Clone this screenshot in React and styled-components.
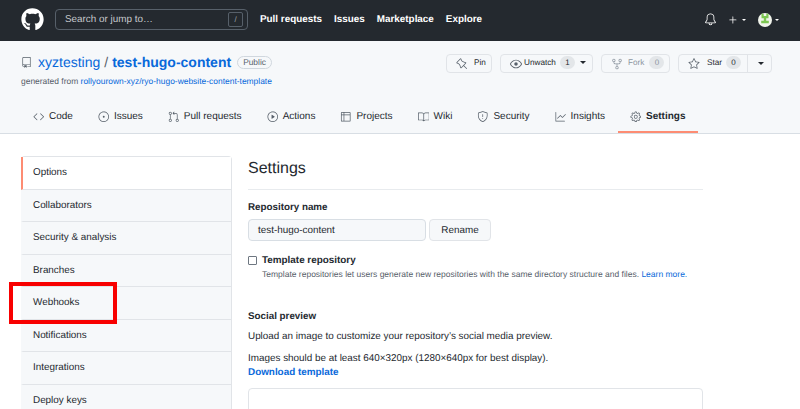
import React from 'react'
import styled, { createGlobalStyle } from 'styled-components'
import { FaGithub } from 'react-icons/fa'
import {
  GoBell,
  GoPlus,
  GoRepo,
  GoPin,
  GoEye,
  GoRepoForked,
  GoStar,
  GoCode,
  GoIssueOpened,
  GoGitPullRequest,
  GoPlay,
  GoTable,
  GoBook,
  GoShield,
  GoGraph,
  GoGear,
} from 'react-icons/go'

const GlobalStyle = createGlobalStyle`
  html, body {
    margin: 0;
    padding: 0;
    background: #fff;
  }
  body {
    font-family: "Liberation Sans", Arial, sans-serif;
    color: #24292f;
    overflow: hidden;
    text-rendering: geometricPrecision;
  }
`

const Page = styled.div`
  position: relative;
  width: 800px;
  height: 409px;
  overflow: hidden;
`

const TopBar = styled.header`
  display: flex;
  align-items: center;
  height: 41px;
  padding: 0 21px 2px;
  background: #24292f;
  color: #fff;
  box-sizing: border-box;
`

const SearchBox = styled.div`
  display: flex;
  align-items: center;
  justify-content: space-between;
  box-sizing: border-box;
  width: 193px;
  height: 21px;
  margin: 0 12px 0 11px;
  padding: 0 4px 0 9px;
  border: 1px solid #57606a;
  border-radius: 4px;
  font-size: 9.9px;
  color: #c4c8cc;
`

const SlashKey = styled.span`
  display: flex;
  align-items: center;
  justify-content: center;
  width: 13px;
  height: 13px;
  border: 1px solid #57606a;
  border-radius: 2px;
  font-size: 8px;
  color: #9ea4aa;
`

const TopNav = styled.nav`
  display: flex;
  gap: 12px;
  font-size: 9.9px;
  font-weight: 700;
  flex: 1;
`

const TopRight = styled.div`
  display: flex;
  align-items: center;
`

const Caret = styled.span`
  display: inline-block;
  width: 0;
  height: 0;
  border-style: solid;
  border-width: ${(p) => (p.$big ? '3px 3px 0' : '2.5px 2.5px 0')};
  border-color: ${(p) => p.$color || '#fff'} transparent transparent;
  margin-left: ${(p) => p.$gap || 3}px;
`

const Avatar = styled.svg`
  width: 14px;
  height: 14px;
  margin-left: 12px;
`

const RepoHead = styled.div`
  box-sizing: border-box;
  height: 93px;
  padding-top: 11px;
  background: #f6f8fa;
  border-bottom: 1px solid #d8dee4;
`

const HeadRow = styled.div`
  display: flex;
  justify-content: space-between;
  padding: 0 28px 0 21px;
  height: 41px;
`

const TitleLine = styled.div`
  display: flex;
  align-items: center;
  height: 20px;
  font-size: 14px;
  color: #0969da;
`

const RepoSub = styled.div`
  margin-top: 4px;
  font-size: 8.45px;
  color: #57606a;
  a {
    color: #0969da;
    text-decoration: none;
  }
`

const Slash = styled.span`
  margin: 0 4px;
  color: #57606a;
`

const Badge = styled.span`
  margin-left: 6px;
  padding: 0 5px;
  height: 13px;
  line-height: 11px;
  box-sizing: border-box;
  border: 1px solid #d0d7de;
  border-radius: 7px;
  font-size: 8.4px;
  color: #57606a;
`

const Actions = styled.div`
  display: flex;
  gap: 8px;
  padding-top: 2px;
`

const ActionButton = styled.div`
  display: flex;
  align-items: center;
  box-sizing: border-box;
  width: ${(p) => p.$width}px;
  height: 19px;
  padding: 0 0 2px 9px;
  background: #f6f8fa;
  border: 1px solid #e1e4e8;
  border-radius: 4px;
  font-size: 8.2px;
  color: ${(p) => (p.$muted ? '#8c959f' : '#24292f')};
  > svg {
    flex: none;
    margin-top: 2px;
    margin-right: ${(p) => p.$iconGap}px;
  }
`

const Counter = styled.span`
  display: flex;
  align-items: center;
  justify-content: center;
  width: 15px;
  height: 13px;
  margin-left: ${(p) => p.$gap || 4}px;
  border-radius: 7px;
  background: #e3e6e9;
  font-size: 8px;
`

const SplitEnd = styled.span`
  display: flex;
  align-items: center;
  justify-content: center;
  align-self: stretch;
  width: 23px;
  margin: 0 0 -2px auto;
  border-left: 1px solid #e1e4e8;
`

const Tabs = styled.nav`
  display: flex;
  height: 40px;
  margin-bottom: -1px;
  padding-left: 20.5px;
  box-sizing: border-box;
`

const Tab = styled.div`
  display: flex;
  align-items: center;
  box-sizing: border-box;
  height: 40px;
  padding: 9px 12.5px 0;
  gap: 4.5px;
  border-bottom: 2px solid ${(p) => (p.$active ? '#fd8c73' : 'transparent')};
  font-size: 10px;
  font-weight: ${(p) => (p.$active ? 700 : 400)};
  color: #24292f;
  svg {
    flex: none;
    color: #57606a;
  }
`

const Content = styled.div`
  display: flex;
  padding: 22px 0 0 21px;
`

const SideMenu = styled.ul`
  box-sizing: border-box;
  width: 211px;
  height: 260px;
  margin: 0 16px 0 0;
  padding: 0;
  list-style: none;
  border: 1px solid #e1e4e8;
  border-bottom: none;
  border-radius: 4px 4px 0 0;
  flex: none;
`

const SideItem = styled.li`
  display: flex;
  align-items: center;
  box-sizing: border-box;
  height: 32.5px;
  padding-left: 10px;
  font-size: 9.9px;
  color: #24292f;
  background: ${(p) => (p.$active ? '#fff' : '#f6f8fa')};
  border-bottom: 1px solid #e1e4e8;
  border-left: 2px solid ${(p) => (p.$active ? '#fd8c73' : 'transparent')};
  margin-left: -1px;
`

const Main = styled.main`
  width: 455px;
  padding-top: 2px;
`

const Heading = styled.h2`
  margin: 0;
  height: 31px;
  font-size: 16px;
  line-height: 22px;
  font-weight: 400;
  border-bottom: 1px solid #e8ebee;
`

const FieldLabel = styled.div`
  margin-top: ${(p) => p.$top}px;
  font-size: 9.8px;
  font-weight: 700;
  line-height: 13px;
`

const FieldRow = styled.div`
  display: flex;
  gap: 3px;
  margin-top: 5px;
`

const NameInput = styled.div`
  display: flex;
  align-items: center;
  box-sizing: border-box;
  width: 178px;
  height: 22px;
  padding-left: 9px;
  background: #f6f8fa;
  border: 1px solid #d8dee4;
  border-radius: 4px;
  font-size: 9.9px;
`

const RenameButton = styled.div`
  display: flex;
  align-items: center;
  justify-content: center;
  box-sizing: border-box;
  width: 62px;
  height: 22px;
  background: #f6f8fa;
  border: 1px solid #e1e4e8;
  border-radius: 4px;
  font-size: 9.9px;
`

const CheckRow = styled.div`
  display: flex;
  align-items: center;
  margin-top: 13px;
  font-size: 9.9px;
  font-weight: 700;
  line-height: 13px;
`

const CheckBox = styled.span`
  box-sizing: border-box;
  width: 9px;
  height: 9px;
  margin-right: 5px;
  background: #fff;
  border: 1px solid #6e7781;
  border-radius: 1px;
`

const Note = styled.div`
  margin: 2px 0 0 14px;
  font-size: 8.5px;
  line-height: 11px;
  color: #57606a;
  white-space: nowrap;
  a {
    color: #0969da;
    text-decoration: none;
  }
`

const Para = styled.p`
  margin: ${(p) => p.$top}px 0 0;
  font-size: 9.9px;
  line-height: 13px;
`

const DownloadLink = styled.a`
  display: block;
  margin-top: 1px;
  font-size: 9.9px;
  line-height: 13px;
  font-weight: 700;
  color: #0969da;
  text-decoration: none;
`

const PreviewBox = styled.div`
  box-sizing: border-box;
  height: 40px;
  margin-top: 9px;
  border: 1px solid #e1e4e8;
  border-radius: 4px;
`

const Highlight = styled.div`
  position: absolute;
  left: 9px;
  top: 282px;
  width: 108px;
  height: 42px;
  box-sizing: border-box;
  border: 4px solid #f80000;
`

const navLinks = ['Pull requests', 'Issues', 'Marketplace', 'Explore']

const tabs = [
  { label: 'Code', Icon: GoCode },
  { label: 'Issues', Icon: GoIssueOpened },
  { label: 'Pull requests', Icon: GoGitPullRequest },
  { label: 'Actions', Icon: GoPlay },
  { label: 'Projects', Icon: GoTable },
  { label: 'Wiki', Icon: GoBook },
  { label: 'Security', Icon: GoShield },
  { label: 'Insights', Icon: GoGraph },
  { label: 'Settings', Icon: GoGear, active: true },
]

const sideItems = [
  'Options',
  'Collaborators',
  'Security & analysis',
  'Branches',
  'Webhooks',
  'Notifications',
  'Integrations',
  'Deploy keys',
]

const App = () => {
  return (
    <Page>
      <GlobalStyle />
      <TopBar>
        <FaGithub size={23} />
        <SearchBox>
          Search or jump to…
          <SlashKey>/</SlashKey>
        </SearchBox>
        <TopNav>
          {navLinks.map((link) => (
            <span key={link}>{link}</span>
          ))}
        </TopNav>
        <TopRight>
          <GoBell size={13} />
          <GoPlus size={12} style={{ marginLeft: 10 }} />
          <Caret />
          <Avatar viewBox="0 0 14 14">
            <circle cx="7" cy="7" r="7" fill="#f1f4ec" />
            <path d="M3.5 0.8h2.2v2.2h2.6V0.8h2.2v4.4H8.2v2.6h2.6V10.2H3.2V7.8h2.6V5.2H3.5z" fill="#7cc652" />
          </Avatar>
          <Caret />
        </TopRight>
      </TopBar>

      <RepoHead>
        <HeadRow>
          <div>
            <TitleLine>
              <GoRepo size={11} color="#57606a" style={{ marginRight: 6 }} />
              xyztesting
              <Slash>/</Slash>
              <b>test-hugo-content</b>
              <Badge>Public</Badge>
            </TitleLine>
            <RepoSub>
              generated from <a href="#">rollyourown-xyz/ryo-hugo-website-content-template</a>
            </RepoSub>
          </div>
          <Actions>
            <ActionButton $width={46} $iconGap={6}>
              <GoPin size={12} color="#57606a" />
              Pin
            </ActionButton>
            <ActionButton $width={93} $iconGap={2}>
              <GoEye size={12} color="#57606a" />
              Unwatch
              <Counter>1</Counter>
              <Caret $big $color="#24292f" $gap={5} />
            </ActionButton>
            <ActionButton $width={69} $muted $iconGap={5}>
              <GoRepoForked size={12} color="#8c959f" />
              Fork
              <Counter $gap={5}>0</Counter>
            </ActionButton>
            <ActionButton $width={94} $iconGap={7}>
              <GoStar size={12} color="#57606a" />
              Star
              <Counter>0</Counter>
              <SplitEnd>
                <Caret $big $color="#24292f" $gap={0} />
              </SplitEnd>
            </ActionButton>
          </Actions>
        </HeadRow>
        <Tabs>
          {tabs.map(({ label, Icon, active }) => (
            <Tab key={label} $active={active}>
              <Icon size={11.5} />
              {label}
            </Tab>
          ))}
        </Tabs>
      </RepoHead>

      <Content>
        <SideMenu>
          {sideItems.map((item, i) => (
            <SideItem key={item} $active={i === 0}>
              {item}
            </SideItem>
          ))}
        </SideMenu>
        <Main>
          <Heading>Settings</Heading>
          <FieldLabel $top={11}>Repository name</FieldLabel>
          <FieldRow>
            <NameInput>test-hugo-content</NameInput>
            <RenameButton>Rename</RenameButton>
          </FieldRow>
          <CheckRow>
            <CheckBox />
            Template repository
          </CheckRow>
          <Note>
            Template repositories let users generate new repositories with the same directory structure and files.{' '}
            <a href="#">Learn more.</a>
          </Note>
          <FieldLabel $top={30}>Social preview</FieldLabel>
          <Para $top={7}>Upload an image to customize your repository’s social media preview.</Para>
          <Para $top={9}>Images should be at least 640×320px (1280×640px for best display).</Para>
          <DownloadLink href="#">Download template</DownloadLink>
          <PreviewBox />
        </Main>
      </Content>
      <Highlight />
    </Page>
  )
}

export default App
